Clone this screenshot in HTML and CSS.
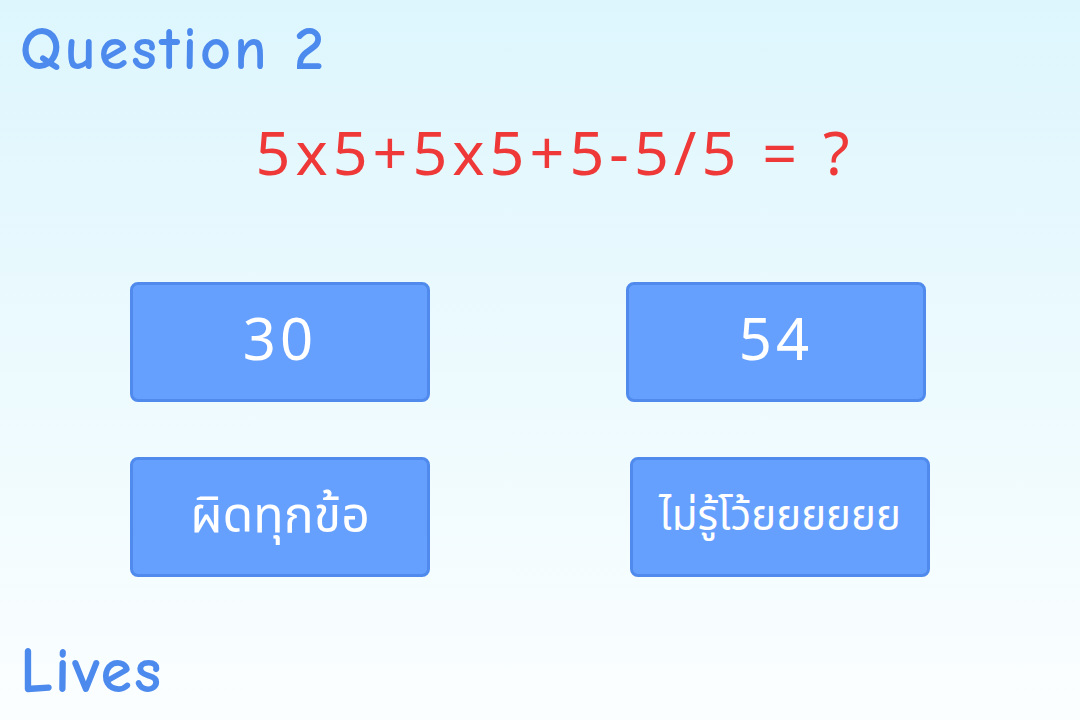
FILE: index.html
```html
<!DOCTYPE html>
<html lang="th">
<head>
    <meta charset="UTF-8">
    <meta name="viewport" content="width=device-width, initial-scale=1.0">
    <title>Quiz</title>
    <link rel="stylesheet" href="styles.css">
</head>
<body>
    <div class="game">
        <h1 class="title">Question 2</h1>
        <div class="question">5x5+5x5+5−5/5 = ?</div>

        <div class="answers">
            <button class="answer num">30</button>
            <button class="answer num">54</button>
            <button class="answer thai">ผิดทุกข้อ</button>
            <button class="answer thai small shift">ไม่รู้โว้ยยยยยย</button>
        </div>

        <div class="lives">Lives</div>
    </div>
</body>
</html>
```

FILE: styles.css
```css
html, body {
    margin: 0;
    height: 100%;
}
body {
    background: linear-gradient(to bottom, #ddf6fd 0%, #fbfeff 100%);
    font-family: "Noto Sans Thai", "Noto Sans", "DejaVu Sans", sans-serif;
}
.game {
    height: 720px;
    display: flex;
    flex-direction: column;
}
.title, .lives {
    font-family: "Comic Sans MS", "Comic Neue", "Lato", sans-serif;
    font-weight: bold;
    color: #4d8aee;
    margin: 0;
}
.title {
    font-size: 60px;
    line-height: 70px;
    letter-spacing: 3px;
    padding: 15px 0 0 20px;
}
.question {
    text-align: center;
    color: #ef3838;
    font-size: 61px;
    line-height: 80px;
    letter-spacing: 5px;
    margin: 31px 0 0 30px;
}
.answers {
    display: grid;
    grid-template-columns: 300px 300px;
    column-gap: 196px;
    row-gap: 55px;
    margin: 86px 0 0 130px;
}
.answer {
    width: 300px;
    height: 120px;
    background-color: #66a0ff;
    border: 3px solid #4f8aec;
    border-radius: 8px;
    color: white;
    font-family: inherit;
    cursor: pointer;
}
.answer.num {
    font-size: 58px;
    letter-spacing: 4px;
}
.answer.thai {
    font-size: 50px;
}
.answer.small {
    font-size: 42px;
}
.shift {
    margin-left: 4px;
}
.lives {
    font-size: 64px;
    line-height: 70px;
    letter-spacing: 2px;
    margin-top: auto;
    padding: 0 0 14px 20px;
}
```
